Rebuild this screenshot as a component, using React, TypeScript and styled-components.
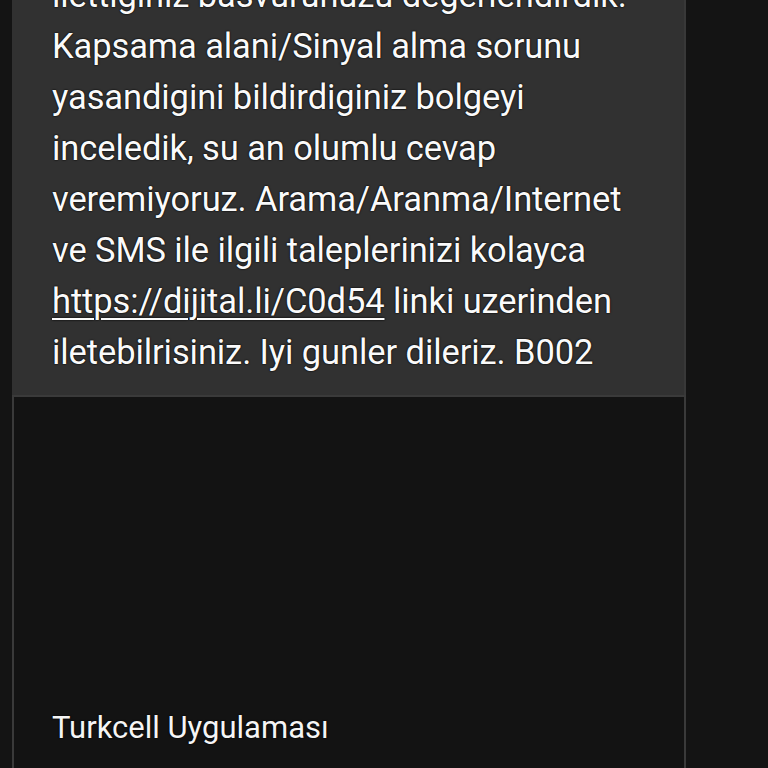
import React from 'react';
import styled, { createGlobalStyle } from 'styled-components';

const GlobalStyle = createGlobalStyle`
  html, body {
    margin: 0;
    padding: 0;
    background: #141414;
    overflow: hidden;
  }
  body {
    font-family: Roboto, "Noto Sans", sans-serif;
  }
`;

const Screen = styled.div`
  width: 768px;
  height: 768px;
  overflow: hidden;
  background: #141414;
`;

const Column = styled.div`
  width: 674px;
  margin-left: 12px;
  margin-top: -30px;
  display: flex;
  flex-direction: column;
`;

const Bubble = styled.div`
  background: #313131;
  border-right: 2px solid #383838;
  padding: 0 0 17px 40px;
  color: #fafafa;
  font-size: 34.5px;
  line-height: 51px;
  letter-spacing: -0.1px;
  text-shadow: 0 0 2px #000, 0 0 1px #000;
`;

const Line = styled.div`
  white-space: nowrap;
`;

const Link = styled.span`
  text-decoration: underline;
  text-decoration-thickness: 2px;
  text-underline-offset: 5px;
`;

const AppCard = styled.div`
  height: 420px;
  border: 2px solid #3a3a3a;
  border-bottom: none;
  background: #131313;
  padding: 313px 0 0 38px;
  box-sizing: border-box;
`;

const AppName = styled.div`
  color: #f5f5f5;
  font-size: 31px;
  line-height: 36px;
  font-weight: 400;
  letter-spacing: 0;
  text-shadow: 0 0 2px #000, 0 0 1px #000;
`;

const lines: React.ReactNode[] = [
  'ilettiginiz basvurunuzu degerlendirdik.',
  'Kapsama alani/Sinyal alma sorunu',
  'yasandigini bildirdiginiz bolgeyi',
  'inceledik, su an olumlu cevap',
  'veremiyoruz. Arama/Aranma/Internet',
  've SMS ile ilgili taleplerinizi kolayca',
  <>
    <Link>https://dijital.li/C0d54</Link> linki uzerinden
  </>,
  'iletebilrisiniz. Iyi gunler dileriz. B002',
];

export default function App() {
  return (
    <Screen>
      <GlobalStyle />
      <Column>
        <Bubble>
          {lines.map((l, i) => (
            <Line key={i}>{l}</Line>
          ))}
        </Bubble>
        <AppCard>
          <AppName>Turkcell Uygulaması</AppName>
        </AppCard>
      </Column>
    </Screen>
  );
}
